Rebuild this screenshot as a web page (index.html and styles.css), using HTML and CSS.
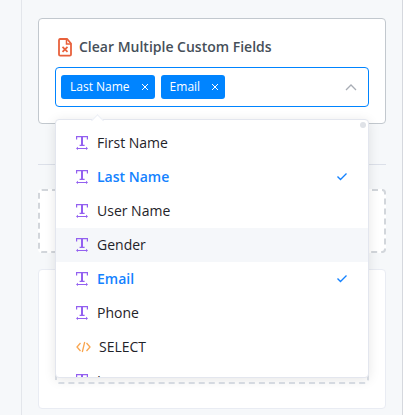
FILE: index.html
```
<!DOCTYPE html>
<html lang="en">
<head>
<meta charset="utf-8">
<meta name="viewport" content="width=device-width, initial-scale=1">
<title>Clear Multiple Custom Fields</title>
<link rel="stylesheet" href="styles.css">
</head>
<body>
<svg class="sprite" aria-hidden="true">
  <symbol id="icon-text" viewBox="0 0 13 14">
    <path d="M0 0h12v3.500h-1.200V1.300H7v7.400h1.600V10h-5V8.700H5V1.300H1.200v2.200H0z"/>
    <path d="M0 12.500L2 10.800V12h8v-1.200l2 1.700-2 1.500v-1H2v1z"/>
  </symbol>
  <symbol id="icon-check" viewBox="0 0 12 10">
    <path d="M1.500 4.500L4.500 7.500L10.500 1.500" fill="none" stroke="currentColor" stroke-width="1.400"/>
  </symbol>
  <symbol id="icon-close" viewBox="0 0 8 8">
    <path d="M1 1l6 6M7 1L1 7" fill="none" stroke="currentColor" stroke-width="1"/>
  </symbol>
</svg>
<main class="panel">
  <section class="card card-active">
    <label class="title" for="fields">
      <svg class="file-icon" viewBox="0 0 14 19" aria-hidden="true">
        <path d="M2 1h7l4 4.500V16.500a1.200 1.200 0 0 1-1.200 1.200H2.200A1.200 1.200 0 0 1 1 16.500V2.200A1.200 1.200 0 0 1 2 1z" fill="none" stroke="currentColor" stroke-width="1.800"/>
        <path d="M8.500 1v5H13" fill="none" stroke="currentColor" stroke-width="1.500"/>
        <path d="M4.500 8.800l5 5M9.500 8.800l-5 5" stroke="currentColor" stroke-width="1.700"/>
      </svg>
      Clear Multiple Custom Fields
    </label>
    <div class="select">
      <span class="tag">Last Name <button class="tag-close" type="button" aria-label="Remove Last Name"><svg width="8" height="8"><use href="#icon-close"/></svg></button></span>
      <span class="tag">Email <button class="tag-close" type="button" aria-label="Remove Email"><svg width="8" height="8"><use href="#icon-close"/></svg></button></span>
      <input class="search" id="fields" type="text" role="combobox" aria-expanded="true" aria-controls="field-list">
      <svg class="chevron" viewBox="0 0 12 8" aria-hidden="true"><path d="M1 7l5-5 5 5" fill="none" stroke="currentColor" stroke-width="1.300"/></svg>
      <div class="dropdown">
        <ul class="options" id="field-list" role="listbox" aria-multiselectable="true">
          <li class="option" role="option"><svg class="type"><use href="#icon-text"/></svg>First Name</li>
          <li class="option selected" role="option" aria-selected="true"><svg class="type"><use href="#icon-text"/></svg>Last Name<svg class="check"><use href="#icon-check"/></svg></li>
          <li class="option" role="option"><svg class="type"><use href="#icon-text"/></svg>User Name</li>
          <li class="option hover" role="option"><svg class="type"><use href="#icon-text"/></svg>Gender</li>
          <li class="option selected" role="option" aria-selected="true"><svg class="type"><use href="#icon-text"/></svg>Email<svg class="check"><use href="#icon-check"/></svg></li>
          <li class="option" role="option"><svg class="type"><use href="#icon-text"/></svg>Phone</li>
          <li class="option" role="option"><svg class="code" viewBox="0 0 15 12"><path d="M4.500 2L1 6l3.500 4M10.500 2L14 6l-3.500 4M8.700 1L6.300 11" fill="none" stroke="currentColor" stroke-width="1.300"/></svg>SELECT</li>
          <li class="option" role="option"><svg class="type"><use href="#icon-text"/></svg>Image</li>
        </ul>
        <span class="thumb"></span>
      </div>
    </div>
  </section>
  <hr class="divider">
  <div class="dropzone"></div>
  <section class="card card-idle">
    <div class="dropzone"></div>
  </section>
</main>
</body>
</html>
```
FILE: styles.css
```
* {
  box-sizing: border-box;
}

body {
  margin: 0;
  min-height: 100vh;
  padding-left: 21px;
  background: #f6f8fa;
  color: #1f2329;
  font: 14px/20px "Open Sans", "Noto Sans", sans-serif;
  overflow: hidden;
}

.sprite {
  position: absolute;
  width: 0;
  height: 0;
}

.panel {
  min-height: 100vh;
  padding: 18px 16px 6px;
  border: solid #d5d8de;
  border-width: 0 1px;
  border-left-color: #e3e6eb;
}

.card {
  padding: 16px;
  background: #fff;
  border: 1px solid #c2c8ce;
  border-radius: 4px;
}

.card-active {
  padding-top: 18px;
}

.title {
  display: flex;
  align-items: center;
  gap: 7px;
  margin: 0 3px 10px;
  color: #464f59;
  font-weight: 600;
}

.file-icon {
  width: 14px;
  height: 19px;
  color: #e8613c;
}

.select {
  position: relative;
  display: flex;
  align-items: center;
  gap: 6px;
  height: 40px;
  padding: 0 11px 0 5px;
  border: 1px solid #0084ff;
  border-radius: 4px;
}

.tag {
  display: flex;
  align-items: center;
  gap: 11px;
  height: 24px;
  padding: 0 6px 0 9px;
  border-radius: 3px;
  background: #0084ff;
  color: #fff;
  font-size: 12px;
  font-weight: 500;
  white-space: nowrap;
}

.tag-close {
  display: flex;
  padding: 0;
  border: 0;
  background: none;
  color: #fff;
}

.search {
  flex: 1;
  min-width: 0;
  border: 0;
  outline: 0;
  background: none;
  font: inherit;
}

.chevron {
  width: 12px;
  height: 8px;
  color: #a8adb5;
}

.dropdown {
  position: absolute;
  top: 51px;
  left: -1px;
  right: -1px;
  z-index: 1;
  border: 1px solid #e3e6ee;
  border-radius: 4px;
  background: #fff;
  box-shadow: 0 2px 12px rgba(0, 0, 0, 0.1);
}

.dropdown::before {
  content: "";
  position: absolute;
  top: -4px;
  left: 37px;
  width: 8px;
  height: 8px;
  border: solid #ebeef5;
  border-width: 1px 0 0 1px;
  background: #fff;
  transform: rotate(45deg);
}

.options {
  height: 257px;
  margin: 0;
  padding: 6px 0;
  overflow: hidden;
  list-style: none;
}

.option {
  display: flex;
  align-items: center;
  gap: 8px;
  height: 34px;
  padding: 0 20px;
}

.selected {
  color: #1482ff;
  font-weight: 600;
}

.hover {
  background: #f5f7fa;
}

.type {
  width: 13px;
  height: 14px;
  fill: #9360f0;
}

.code {
  width: 15px;
  height: 12px;
  color: #f9a650;
}

.check {
  width: 12px;
  height: 10px;
  margin-left: auto;
}

.thumb {
  position: absolute;
  top: 2px;
  right: 2px;
  width: 6px;
  height: 6px;
  border-radius: 50%;
  background: #dfe2e7;
}

.divider {
  margin: 40px 0 24px;
  border: 0;
  border-top: 1px solid #dce0e9;
}

.dropzone {
  height: 64px;
  border: 2px dashed #d2d6db;
  border-radius: 4px;
  background: #fff;
}

.card-idle {
  margin-top: 16px;
  padding: 50px 16px 24px;
  border-color: #e9ecf3;
}

.card-idle .dropzone {
  border-color: #dce1e8;
}
```
